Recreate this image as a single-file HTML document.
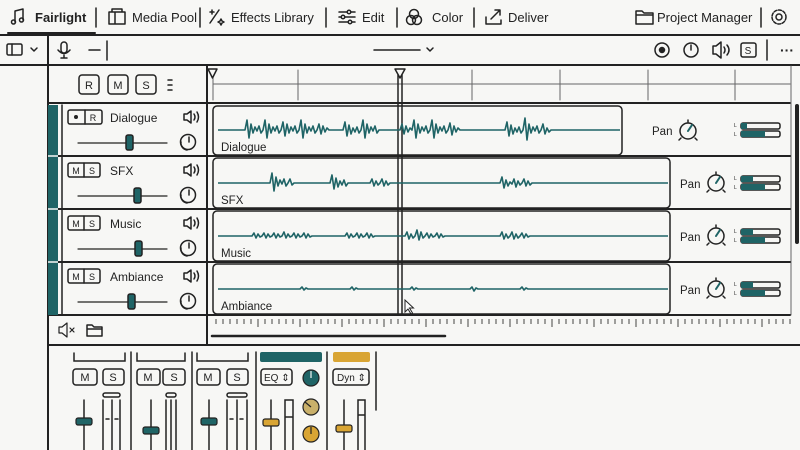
<!DOCTYPE html>
<html><head><meta charset="utf-8"><style>
html,body{margin:0;padding:0;background:#f7f7f5;}
svg{display:block}
text{font-family:"Liberation Sans",sans-serif;fill:#222}
</style></head><body>
<svg width="800" height="450" viewBox="0 0 800 450" xmlns="http://www.w3.org/2000/svg">
<rect width="800" height="450" fill="#f7f7f5"/>
<g stroke="#222" fill="none" stroke-width="1.5" stroke-linecap="round" stroke-linejoin="round">
<line x1="0" y1="35" x2="800" y2="35" stroke-width="2"/>
<line x1="8" y1="33" x2="95" y2="33" stroke-width="2"/>
<path d="M15,11 L23,9 L23,20 M15,11 L15,22"/><circle cx="13.5" cy="22" r="2"/><circle cx="21.5" cy="20" r="2"/>
<line x1="96" y1="8" x2="96" y2="27"/><line x1="200" y1="8" x2="200" y2="27"/><line x1="326" y1="8" x2="326" y2="27"/><line x1="397" y1="8" x2="397" y2="27"/><line x1="474" y1="8" x2="474" y2="27"/><line x1="761" y1="8" x2="761" y2="27"/>
<path d="M109,12 h16 v12 h-16 z M112,12 v-3 h10 v3 M115,12 v12"/>
<path d="M210,23 l9,-13 M212,10 v4 M210,12 h4 M221,19 l1,2 l2,1 l-2,1 l-1,2 l-1,-2 l-2,-1 l2,-1 z"/>
<path d="M339,12 h16 M339,17 h16 M339,22 h16"/><circle cx="349" cy="12" r="1.8" fill="#f7f7f5"/><circle cx="343" cy="17" r="1.8" fill="#f7f7f5"/><circle cx="350" cy="22" r="1.8" fill="#f7f7f5"/>
<circle cx="414" cy="14" r="4.5"/><circle cx="411" cy="20" r="4.5"/><circle cx="417" cy="20" r="4.5"/>
<path d="M486,17 v7 h15 v-4 M491,19 l9,-9 M495,10 h5 v5"/>
<path d="M636,11 h6 l2,2 h9 v11 h-17 z M636,15 h17"/>
<circle cx="779" cy="17" r="3"/><circle cx="779" cy="17" r="7" stroke-dasharray="3 1.6"/>
<line x1="0" y1="65" x2="800" y2="65" stroke-width="2"/>
<line x1="48" y1="36" x2="48" y2="450" stroke-width="2"/>
<rect x="7" y="44" width="15" height="11" rx="1.5"/><line x1="12" y1="44" x2="12" y2="55"/>
<path d="M31,48 l3,3 l3,-3"/>
<rect x="61" y="42" width="6" height="11" rx="3"/><path d="M58,50 q6,7 12,0 M64,55 v3 M61,58 h6"/>
<line x1="89" y1="50" x2="100" y2="50"/><line x1="107" y1="41" x2="107" y2="60"/>
<line x1="374" y1="50" x2="420" y2="50"/><path d="M427,48 l3,3 l3,-3"/>
<circle cx="662" cy="50" r="7"/><circle cx="662" cy="50" r="2.5" fill="#222"/>
<circle cx="691" cy="50" r="7"/><line x1="691" y1="45" x2="691" y2="50"/>
<path d="M713,46 h3 l5,-4 v16 l-5,-4 h-3 z M724,47 q2,3 0,6 M727,45 q4,5 0,10"/>
<rect x="741" y="43" width="15" height="14" rx="2"/>
<line x1="767" y1="40" x2="767" y2="60"/>
<line x1="48" y1="103" x2="790" y2="103" stroke-width="2"/>
<line x1="207" y1="66" x2="207" y2="345" stroke-width="2"/>
<rect x="79" y="75" width="20" height="19" rx="3"/><rect x="108" y="75" width="20" height="19" rx="3"/><rect x="136" y="75" width="20" height="19" rx="3"/>
<path d="M168,80 h4 M168,85 h4 M168,90 h4"/>
<g stroke="#666" stroke-width="1"><line x1="213" y1="84" x2="790" y2="84"/>
<line x1="213" y1="70" x2="213" y2="100"/><line x1="298" y1="70" x2="298" y2="100"/><line x1="472" y1="70" x2="472" y2="100"/><line x1="560" y1="70" x2="560" y2="100"/><line x1="648" y1="70" x2="648" y2="100"/><line x1="735" y1="70" x2="735" y2="100"/><line x1="791" y1="66" x2="791" y2="315"/></g>
<path d="M208,69 h9 l-4.5,9 z" fill="#f7f7f5"/>
<path d="M395,69 h10 l-5,9 z" fill="#f7f7f5"/>
<line x1="398" y1="75" x2="398" y2="315"/><line x1="402" y1="75" x2="402" y2="315"/>
<line x1="48" y1="156" x2="790" y2="156" stroke-width="2"/><line x1="48" y1="209" x2="790" y2="209" stroke-width="2"/><line x1="48" y1="262" x2="790" y2="262" stroke-width="2"/><line x1="48" y1="315" x2="790" y2="315" stroke-width="2"/>
<line x1="62" y1="105" x2="62" y2="315"/>
<rect x="213" y="106" width="409" height="49" rx="4"/>
<rect x="213" y="158" width="457" height="50" rx="4"/>
<rect x="213" y="211" width="457" height="50" rx="4"/>
<rect x="213" y="264" width="457" height="50" rx="4"/>
<rect x="68" y="110" width="34" height="14" rx="2"/><line x1="85" y1="110" x2="85" y2="124"/>
<rect x="68" y="163" width="32" height="14" rx="2"/><line x1="84" y1="163" x2="84" y2="177"/>
<rect x="68" y="216" width="32" height="14" rx="2"/><line x1="84" y1="216" x2="84" y2="230"/>
<rect x="68" y="269" width="32" height="14" rx="2"/><line x1="84" y1="269" x2="84" y2="283"/>
<g stroke-width="1.2"><line x1="78" y1="143" x2="167" y2="143"/><line x1="78" y1="196" x2="167" y2="196"/><line x1="78" y1="249" x2="167" y2="249"/><line x1="78" y1="302" x2="167" y2="302"/></g>
<g fill="#1f6466"><rect x="126" y="135" width="7" height="15" rx="2"/><rect x="134" y="188" width="7" height="15" rx="2"/><rect x="135" y="241" width="7" height="15" rx="2"/><rect x="128" y="294" width="7" height="15" rx="2"/></g>
<g id="spk"><path d="M184,114 h3 l4,-3 v12 l-4,-3 h-3 z M194,114 q2,3 0,6 M197,112 q3,5 0,10"/><circle cx="188" cy="142" r="7.5"/><path d="M181,142 a7,7 0 0 0 6,8"/><line x1="189" y1="137" x2="189" y2="142"/></g>
<use href="#spk" y="53"/><use href="#spk" y="106"/><use href="#spk" y="159"/>
<g id="knob"><circle cx="688" cy="131" r="8"/><line x1="688" y1="120" x2="688" y2="122"/><line x1="679" y1="140" x2="681" y2="138"/><line x1="697" y1="140" x2="695" y2="138"/>
<line x1="688" y1="131" x2="692" y2="125" stroke="#1f6466" stroke-width="2"/></g>
<use href="#knob" x="28" y="52"/><use href="#knob" x="28" y="105"/><use href="#knob" x="28" y="158"/>
<g id="met"><rect x="741" y="123" width="39" height="6" rx="2"/><rect x="741" y="131" width="39" height="6" rx="2"/>
<rect x="741" y="123" width="6" height="6" fill="#1f6466" stroke="none"/><rect x="741" y="131" width="24" height="6" fill="#1f6466" stroke="none"/></g>
<g id="met2"><rect x="741" y="176" width="39" height="6" rx="2"/><rect x="741" y="184" width="39" height="6" rx="2"/>
<rect x="741" y="176" width="12" height="6" fill="#1f6466" stroke="none"/><rect x="741" y="184" width="24" height="6" fill="#1f6466" stroke="none"/></g>
<use href="#met2" y="53"/><use href="#met2" y="106"/>
<line x1="48" y1="345" x2="800" y2="345" stroke-width="2"/>
<path d="M59,327 h3 l5,-4 v14 l-5,-4 h-3 z M70,328 l4,4 M74,328 l-4,4" stroke-width="1.2"/>
<path d="M87,325 h5 l2,2 h8 v9 h-15 z M87,329 h15"/>
<line x1="212" y1="336" x2="445" y2="336" stroke-width="2.5"/>
</g>
<g stroke="#1f6466" fill="none" stroke-width="1.6" stroke-linejoin="round">
<path d="M218,130 H245 l2,-10 l2,18 l2,-14 l2,9 l2,-6 l2,4 l2,-5 l2,7 l2,-3 l2,-10 l2,18 l2,-14 l2,9 l2,-6 l2,4 l2,-5 l2,7 l2,-3 l2,-8 l2,14 l2,-12 l2,9 l2,-6 l2,4 l2,-5 l2,7 l2,-3 l2,-10 l2,18 l2,-14 l2,9 l2,-6 l2,4 l2,-5 l2,7 l2,-3 l2,-6 l2,10 l2,-8 l2,6 l2,-4 l2,2 H343 l2,-8 l2,14 l2,-11 l2,9 l2,-6 l2,4 l2,-5 l2,6 l2,-3 l2,-10 l2,18 l2,-14 l2,9 l2,-6 l2,4 l2,-5 l2,7 l2,-3 H400 l2,-6 l2,10 l2,-8 l2,6 l2,-4 l2,2 l2,-10 l2,18 l2,-14 l2,9 l2,-6 l2,4 l2,-5 l2,7 l2,-3 l2,-10 l2,18 l2,-14 l2,9 l2,-6 l2,4 l2,-5 l2,7 l2,-3 l2,-7 l2,12 l2,-9 l2,6 l2,-4 l2,2 H505 l2,-8 l2,14 l2,-11 l2,9 l2,-6 l2,4 l2,-5 l2,6 l2,-3 l2,-12 l2,22 l2,-16 l2,9 l2,-6 l2,4 l2,-5 l2,7 l2,-3 l2,-6 l2,10 l2,-6 l2,4 l2,-2 H620"/>
<path d="M218,183 H270 l2,-10 l2,18 l2,-14 l2,9 l2,-6 l2,4 l2,-5 l2,7 l2,-3 l2,-4 l2,6 l2,-2 H330 l2,-8 l2,14 l2,-11 l2,9 l2,-6 l2,4 l2,-5 l2,6 l2,-3 H370 l2,-4 l2,7 l2,-5 l2,4 l2,-2 l2,-4 l2,7 l2,-5 l2,4 l2,-2 H500 l2,-6 l2,11 l2,-8 l2,6 l2,-4 l2,2 l2,-5 l2,8 l2,-6 l2,4 l2,-2 l2,-4 l2,7 l2,-5 l2,4 l2,-2 H668"/>
<path d="M218,236 H252 l2,-3 l2,5 l2,-4 l2,3 l2,-1 l2,-3 l2,5 l2,-4 l2,3 l2,-1 l2,-3 l2,5 l2,-4 l2,3 l2,-1 l2,-4 l2,6 l2,-4 l2,3 l2,-1 l2,-3 l2,5 l2,-4 l2,3 l2,-1 l2,-3 l2,5 l2,-4 l2,3 l2,-1 H345 l2,-3 l2,5 l2,-4 l2,3 l2,-1 l2,-3 l2,5 l2,-4 l2,3 l2,-1 l2,-3 l2,5 l2,-4 l2,3 l2,-1 H405 l2,-4 l2,7 l2,-5 l2,4 l2,-2 l2,-6 l2,10 l2,-8 l2,6 l2,-2 l2,-3 l2,5 l2,-4 l2,3 l2,-1 l2,-3 l2,5 l2,-4 l2,3 l2,-1 H500 l2,-4 l2,7 l2,-5 l2,4 l2,-2 l2,-4 l2,7 l2,-5 l2,4 l2,-2 l2,-3 l2,5 l2,-4 l2,3 l2,-1 H668"/>
<path d="M218,289 H300 l2,-2 l2,3 l2,-2 l2,1 H350 l2,-2 l2,3 l2,-2 l2,1 H410 l2,-2 l2,3 l2,-2 l2,1 H470 l2,-2 l2,4 l2,-3 l2,1 H520 l2,-2 l2,3 l2,-2 l2,1 H668"/>
</g>
<rect x="48" y="105" width="10" height="210" fill="#1f6466"/>
<g stroke="#f7f7f5" stroke-width="1.5"><line x1="48" y1="156" x2="58" y2="156"/><line x1="48" y1="209" x2="58" y2="209"/><line x1="48" y1="262" x2="58" y2="262"/></g>
<rect x="795" y="104" width="4" height="140" rx="2" fill="#222"/>
<g stroke="#444" stroke-width="1">
<path d="M216,319v5M223,319v5M230,319v5M237,319v5M244,319v5M251,319v5M258,319v8M265,319v5M272,319v5M279,319v5M286,319v5M293,319v5M300,319v8M307,319v5M314,319v5M321,319v5M328,319v5M335,319v5M342,319v8M349,319v5M356,319v5M363,319v5M370,319v5M377,319v5M384,319v8M391,319v5M398,319v5M405,319v5M412,319v5M419,319v5M426,319v8M433,319v5M440,319v5M447,319v5M454,319v5M461,319v5M468,319v8M475,319v5M482,319v5M489,319v5M496,319v5M503,319v5M510,319v8M517,319v5M524,319v5M531,319v5M538,319v5M545,319v5M552,319v8M559,319v5M566,319v5M573,319v5M580,319v5M587,319v5M594,319v8M601,319v5M608,319v5M615,319v5M622,319v5M629,319v5M636,319v8M643,319v5M650,319v5M657,319v5M664,319v5M671,319v5M678,319v8M685,319v5M692,319v5M699,319v5M706,319v5M713,319v5M720,319v8M727,319v5M734,319v5M741,319v5M748,319v5M755,319v5M762,319v8M769,319v5M776,319v5M783,319v5M790,319v5"/>
</g>
<path d="M405,300 l0,12 l3,-3 l3,5 l1.5,-1 l-3,-5 l4,0 z" fill="#fff" stroke="#222" stroke-width="1"/>
<g stroke="#222" fill="none" stroke-width="1.5" stroke-linecap="round">
<line x1="131" y1="352" x2="131" y2="450"/><line x1="192" y1="352" x2="192" y2="450"/><line x1="256" y1="352" x2="256" y2="450"/><line x1="327" y1="352" x2="327" y2="450"/><line x1="376" y1="352" x2="376" y2="410"/>
<path d="M74,353 v8 h51 v-8 M137,353 v8 h48 v-8 M197,353 v8 h51 v-8"/>
<rect x="73" y="369" width="24" height="16" rx="3"/><rect x="103" y="369" width="21" height="16" rx="3"/>
<rect x="137" y="369" width="23" height="16" rx="3"/><rect x="163" y="369" width="22" height="16" rx="3"/>
<rect x="197" y="369" width="23" height="16" rx="3"/><rect x="227" y="369" width="21" height="16" rx="3"/>
<rect x="261" y="369" width="31" height="16" rx="3"/><rect x="333" y="369" width="36" height="16" rx="3"/>
<line x1="84" y1="400" x2="84" y2="450"/><line x1="151" y1="400" x2="151" y2="450"/><line x1="209" y1="400" x2="209" y2="450"/><line x1="271" y1="400" x2="271" y2="450"/><line x1="344" y1="400" x2="344" y2="450"/>
<rect x="103" y="393" width="17" height="4" rx="2"/><path d="M103,400 v50 M112,400 v50 M120,400 v50 M106,419 h3 M115,419 h3"/>
<rect x="166" y="393" width="10" height="4" rx="2"/><path d="M166,400 v50 M171,400 v50 M176,400 v50"/>
<rect x="227" y="393" width="20" height="4" rx="2"/><path d="M227,400 v50 M237,400 v50 M247,400 v50 M230,419 h3 M240,419 h3"/>
<path d="M285,450 v-50 h8 v50 M286,417 h6 M358,450 v-50 h7 v50 M359,415 h5"/>
</g>
<rect x="260" y="352" width="62" height="10" rx="2" fill="#1f6466"/>
<rect x="333" y="352" width="37" height="10" rx="2" fill="#d9a534"/>
<g stroke="#222" stroke-width="1.2">
<rect x="76" y="418" width="16" height="7" rx="2" fill="#1f6466"/>
<rect x="143" y="427" width="16" height="7" rx="2" fill="#1f6466"/>
<rect x="201" y="418" width="16" height="7" rx="2" fill="#1f6466"/>
<rect x="263" y="419" width="16" height="7" rx="2" fill="#d9a534"/>
<rect x="336" y="425" width="16" height="7" rx="2" fill="#d9a534"/>
<circle cx="311" cy="378" r="8" fill="#1f6466"/><line x1="311" y1="378" x2="311" y2="371" stroke="#f7f7f5"/>
<circle cx="311" cy="407" r="8" fill="#c9b06a"/><line x1="311" y1="407" x2="305" y2="402"/>
<circle cx="311" cy="434" r="8" fill="#d9a534"/><line x1="311" y1="434" x2="311" y2="427"/>
</g>
<g font-size="13">
<text x="35" y="22" font-weight="bold">Fairlight</text>
<text x="132" y="22">Media Pool</text>
<text x="231" y="22">Effects Library</text>
<text x="362" y="22">Edit</text>
<text x="432" y="22">Color</text>
<text x="508" y="22">Deliver</text>
<text x="657" y="22">Project Manager</text>
</g>
<g font-size="11" text-anchor="middle">
<text x="89" y="89">R</text><text x="118" y="89">M</text><text x="146" y="89">S</text>
<text x="748" y="54" font-size="10">S</text>
<text x="93" y="121" font-size="9">R</text>
<text x="76" y="174" font-size="9">M</text><text x="92" y="174" font-size="9">S</text>
<text x="76" y="227" font-size="9">M</text><text x="92" y="227" font-size="9">S</text>
<text x="76" y="280" font-size="9">M</text><text x="92" y="280" font-size="9">S</text>
<text x="85" y="381">M</text><text x="113" y="381">S</text>
<text x="148" y="381">M</text><text x="174" y="381">S</text>
<text x="208" y="381">M</text><text x="237" y="381">S</text>
</g>
<circle cx="76" cy="117" r="2" fill="#222"/>
<text x="780" y="55" font-size="14" font-weight="bold">···</text>
<g font-size="12">
<text x="110" y="122">Dialogue</text><text x="110" y="175">SFX</text><text x="110" y="228">Music</text><text x="110" y="281">Ambiance</text>
</g>
<g font-size="11.5">
<text x="221" y="151">Dialogue</text><text x="221" y="204">SFX</text><text x="221" y="257">Music</text><text x="221" y="310">Ambiance</text>
<text x="652" y="135">Pan</text><text x="680" y="188">Pan</text><text x="680" y="241">Pan</text><text x="680" y="294">Pan</text>
</g>
<g font-size="5" fill="#222"><text x="734" y="127">L</text><text x="734" y="136">L</text><text x="734" y="180">L</text><text x="734" y="189">L</text><text x="734" y="233">L</text><text x="734" y="242">L</text><text x="734" y="286">L</text><text x="734" y="295">L</text></g>
<g font-size="10"><text x="264" y="381">EQ ⇕</text><text x="337" y="381">Dyn ⇕</text></g>
</svg>
</body></html>
